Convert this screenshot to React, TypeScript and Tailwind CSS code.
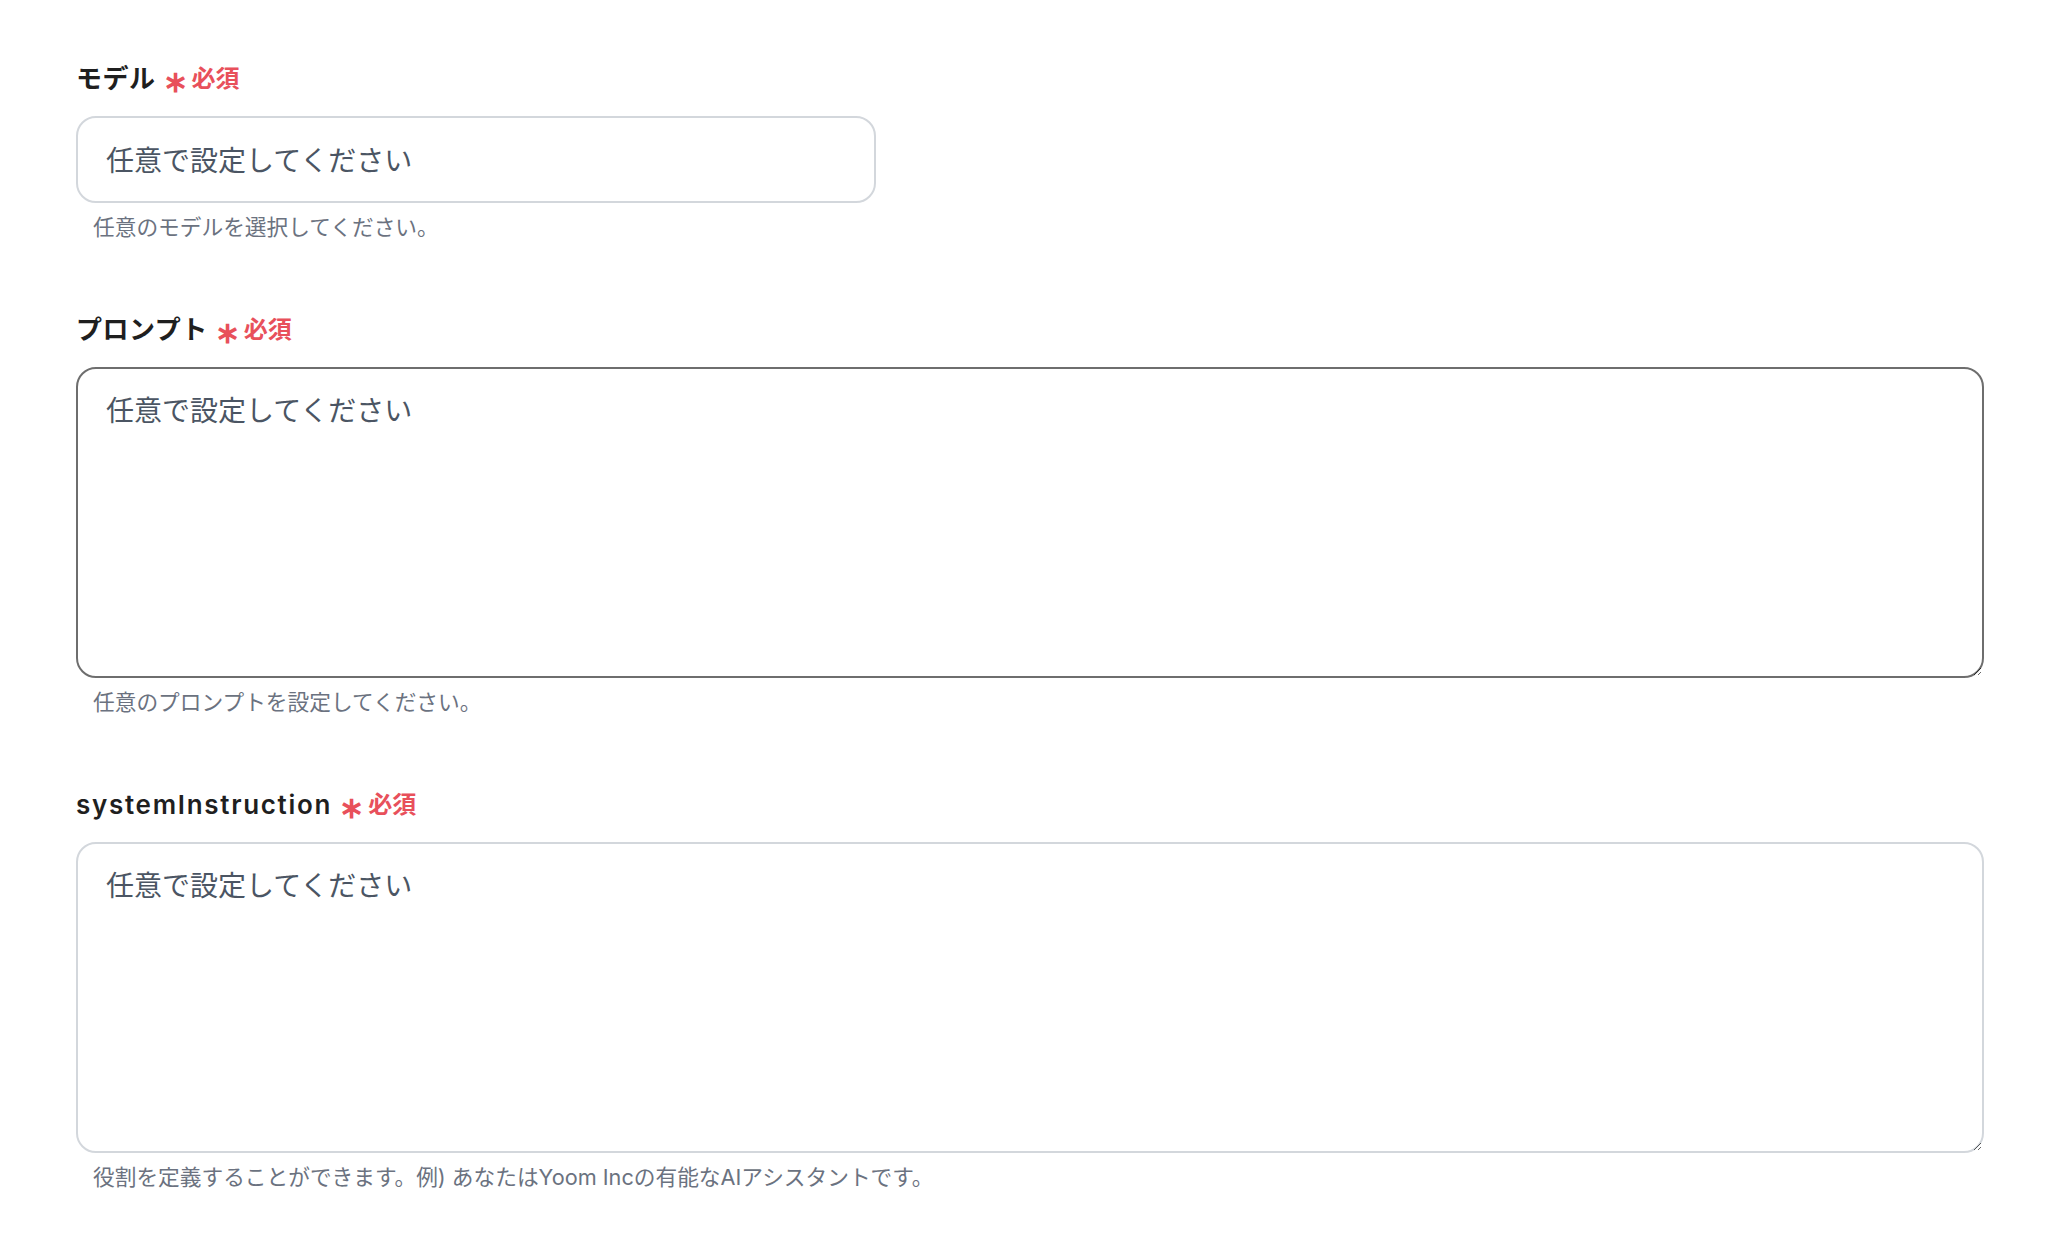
const font = "font-['Inter','Noto_Sans_CJK_JP',sans-serif]";

type FieldProps = {
  label: string;
  help: string;
  multiline?: boolean;
  focused?: boolean;
};

function Field({ label, help, multiline, focused }: FieldProps) {
  const border = focused ? "border-[#6e6e6e]" : "border-[#d3d7dc]";
  // latin labels render wider in the original font
  const latin = /^[A-Za-z]+$/.test(label);
  return (
    <div className="flex flex-col">
      <div className="flex items-center h-[36px] mb-[19px]">
        <span
          className={`text-[26px] font-semibold text-[#1f1f1f] leading-[36px] ${latin ? "tracking-[1.7px]" : "tracking-[0.5px]"}`}
        >
          {label}
        </span>
        <span className="ml-[7px] text-[30px] font-semibold text-[#e8505b] leading-none translate-y-[2px]">∗</span>
        <span className="ml-[4px] text-[24px] font-semibold text-[#e8505b] leading-[36px]">必須</span>
      </div>
      {multiline ? (
        <textarea
          placeholder="任意で設定してください"
          className={`w-full h-[311px] rounded-[20px] border-2 ${border} bg-white px-[28px] pt-[21px] pb-[20px] text-[28px] leading-[42px] text-[#4b5563] placeholder:text-[#4b5563] outline-none resize-y`}
        />
      ) : (
        <input
          placeholder="任意で設定してください"
          className={`w-[800px] h-[87px] rounded-[20px] border-2 ${border} bg-white px-[28px] pt-[2px] text-[28px] text-[#4b5563] placeholder:text-[#4b5563] outline-none`}
        />
      )}
      <p className="mt-[9px] pl-[17px] text-[21.7px] leading-[30px] text-[#6b7280]">{help}</p>
    </div>
  );
}

export default function App() {
  return (
    <div className={`min-h-screen bg-white ${font}`}>
      <div className="flex flex-col gap-[70px] pl-[76px] pr-[74px] pt-[61px] pb-[40px]">
        <Field label="モデル" help="任意のモデルを選択してください。" />
        <Field label="プロンプト" help="任意のプロンプトを設定してください。" multiline focused />
        <Field
          label="systemInstruction"
          help="役割を定義することができます。例) あなたはYoom Incの有能なAIアシスタントです。"
          multiline
        />
      </div>
    </div>
  );
}
